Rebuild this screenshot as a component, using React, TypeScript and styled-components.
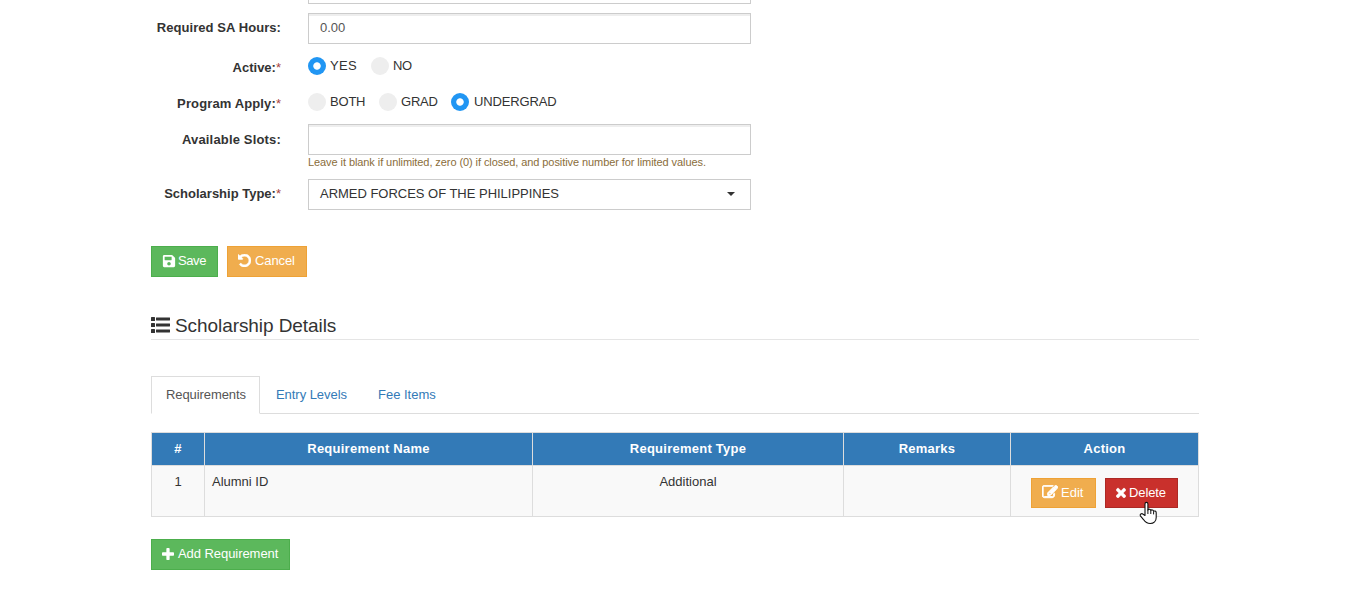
import React from 'react';
import styled, { createGlobalStyle, css } from 'styled-components';
import { FaSave } from 'react-icons/fa';

const GlobalStyle = createGlobalStyle`
  * { box-sizing: border-box; }
  body {
    margin: 0;
    background: #fff;
    color: #333;
    font: 13px/18px "Liberation Sans", Arial, sans-serif;
    overflow: hidden;
  }
`;

const Page = styled.main`
  width: 1048px;
  height: 601px;
  margin-left: 151px;
`;

const FormRow = styled.div<{ $h: number; $gap?: number }>`
  display: flex;
  height: ${(p) => p.$h}px;
  margin-bottom: ${(p) => p.$gap ?? 0}px;
`;

const Label = styled.label<{ $top: number; $ls: number }>`
  width: 130px;
  margin-right: 27px;
  padding-top: ${(p) => p.$top}px;
  text-align: right;
  font-weight: 700;
  white-space: nowrap;
  letter-spacing: ${(p) => p.$ls}px;
`;

const Required = styled.span`
  color: #a94442;
  font-weight: 400;
  letter-spacing: 0;
`;

const Field = styled.div`
  width: 443px;
`;

const control = css`
  width: 443px;
  height: 31px;
  border: 1px solid #ccc;
  background: #fff;
`;

const Input = styled.input`
  ${control}
  display: block;
  padding: 0 11px 2px;
  color: #555;
  font: inherit;
  border-radius: 0;
  outline: none;
  box-shadow: inset 0 2px 0 #eee;
`;

const ClippedInput = styled.div`
  width: 443px;
  height: 4px;
  margin: 0 0 9px 157px;
  border: solid #ccc;
  border-width: 0 1px 1px;
`;

const Help = styled.div`
  color: #8a6d3b;
  font-size: 11px;
  line-height: 15px;
  letter-spacing: -0.078px;
  white-space: nowrap;
`;

const Select = styled.div`
  ${control}
  display: flex;
  align-items: center;
  justify-content: space-between;
  padding: 0 15px 2px 11px;
`;

const SelectText = styled.span`
  letter-spacing: -0.02px;
`;

const Caret = styled.span`
  margin-top: 1px;
  border-top: 4px solid #333;
  border-left: 4px solid transparent;
  border-right: 4px solid transparent;
`;

const Radios = styled.div`
  display: flex;
  align-items: flex-start;
`;

const RadioLabel = styled.label<{ $w: number; $ls?: number; $gap?: number }>`
  display: flex;
  width: ${(p) => p.$w}px;
  gap: ${(p) => p.$gap ?? 4}px;
  line-height: 17px;
  white-space: nowrap;
  letter-spacing: ${(p) => p.$ls ?? 0}px;
`;

const Dot = styled.span<{ $on?: boolean }>`
  width: 18px;
  height: 18px;
  flex: none;
  border-radius: 50%;
  background: ${(p) => (p.$on ? 'radial-gradient(circle, #fff 3.3px, #2196f3 4.1px)' : '#eee')};
`;

const tones = {
  success: ['#5cb85c', '#4cae4c'],
  warning: ['#f0ad4e', '#eea236'],
  danger: ['#c9302c', '#ac2925'],
};

const Button = styled.button<{ $tone: keyof typeof tones; $w: number; $h?: number; $gap?: number; $ls?: number }>`
  display: flex;
  align-items: center;
  gap: ${(p) => p.$gap ?? 3}px;
  width: ${(p) => p.$w}px;
  height: ${(p) => p.$h ?? 31}px;
  padding: 0 0 1px 10px;
  color: #fff;
  font: inherit;
  letter-spacing: ${(p) => p.$ls ?? 0}px;
  white-space: nowrap;
  background: ${(p) => tones[p.$tone][0]};
  border: 1px solid ${(p) => tones[p.$tone][1]};
  cursor: pointer;
  svg { flex: none; margin-bottom: 1px; }
`;

const Actions = styled.div`
  display: flex;
  gap: 9px;
`;

const Heading = styled.h2`
  display: flex;
  align-items: center;
  gap: 5px;
  height: 29px;
  margin: 34px 0 36px;
  padding-top: 1px;
  border-bottom: 1px solid #e5e5e5;
  font-size: 19px;
  font-weight: 400;
  letter-spacing: -0.07px;
  svg { margin-bottom: 2px; }
`;

const Tabs = styled.nav`
  display: flex;
  gap: 1px;
  height: 38px;
  margin-bottom: 18px;
  border-bottom: 1px solid #ddd;
`;

const Tab = styled.a<{ $active?: boolean; $w: number; $ls?: number }>`
  width: ${(p) => p.$w}px;
  height: 38px;
  padding: 9px 0 0 14px;
  border: 1px solid transparent;
  color: #337ab7;
  white-space: nowrap;
  letter-spacing: ${(p) => p.$ls ?? 0}px;
  ${(p) => p.$active && css`
    color: #555;
    background: #fff;
    border-color: #ddd #ddd #fff;
  `}
`;

const Table = styled.table`
  width: 1048px;
  table-layout: fixed;
  border-collapse: separate;
  border-spacing: 0;
  border: solid #ddd;
  border-width: 1px 0 0 1px;
  margin-bottom: 22px;
`;

const Th = styled.th<{ $w: number }>`
  width: ${(p) => p.$w}px;
  height: 33px;
  padding: 0;
  color: #fff;
  background: #337ab7;
  border: solid #ddd;
  border-width: 0 1px 1px 0;
  letter-spacing: 0.25px;
`;

const Td = styled.td<{ $left?: boolean }>`
  height: 51px;
  padding: 7px 7px 0;
  vertical-align: top;
  text-align: ${(p) => (p.$left ? 'left' : 'center')};
  background: #f9f9f9;
  border: solid #ddd;
  border-width: 0 1px 1px 0;
`;

const RowActions = styled(Actions)`
  padding: 5px 0 0 13px;
`;

const PointerHost = styled.span`
  position: relative;
`;

const Pointer = styled.svg`
  position: absolute;
  left: 34px;
  top: 23px;
  pointer-events: none;
`;

const glyphs = {
  undo: 'M1664 896q0 156-61 298t-164 245-245 164-298 61q-172 0-327-72.5t-264-204.5q-7-10-6.5-22.5t8.5-20.5l137-138q10-9 25-9 16 2 23 12 73 95 179 147t225 52q104 0 198.5-40.5t163.5-109.5 109.5-163.5 40.5-198.5-40.5-198.5-109.5-163.5-163.5-109.5-198.5-40.5q-98 0-188 35.5t-160 101.5l137 138q31 30 14 69-17 40-59 40h-448q-26 0-45-19t-19-45v-448q0-42 40-59 39-17 69 14l130 129q107-101 244.5-156.5t284.5-55.5q156 0 298 61t245 164 164 245 61 298z',
  times: 'M1490 1322q0 40-28 68l-136 136q-28 28-68 28t-68-28l-294-294-294 294q-28 28-68 28t-68-28l-136-136q-28-28-28-68t28-68l294-294-294-294q-28-28-28-68t28-68l136-136q28-28 68-28t68 28l294 294 294-294q28-28 68-28t68 28l136 136q28 28 28 68t-28 68l-294 294 294 294q28 28 28 68z',
  plus: 'M1600 736v192q0 40-28 68t-68 28h-416v416q0 40-28 68t-68 28h-192q-40 0-68-28t-28-68v-416h-416q-40 0-68-28t-28-68v-192q0-40 28-68t68-28h416v-416q0-40 28-68t68-28h192q40 0 68 28t28 68v416h416q40 0 68 28t28 68z',
  edit: 'M888 1184l116-116-152-152-116 116v56h96v96h56zm440-720q-16-16-33 1l-350 350q-17 17-1 33t33-1l350-350q17-17 1-33zm80 594v190q0 119-84.5 203.5t-203.5 84.5h-832q-119 0-203.5-84.5t-84.5-203.5v-832q0-119 84.5-203.5t203.5-84.5h832q63 0 117 25 15 7 18 23 3 17-9 29l-49 49q-14 14-32 8-23-6-45-6h-832q-66 0-113 47t-47 113v832q0 66 47 113t113 47h832q66 0 113-47t47-113v-126q0-13 9-22l64-64q15-15 35-7t20 29zm-96-738l288 288-672 672h-288v-288zm444 132l-92 92-288-288 92-92q28-28 68-28t68 28l152 152q28 28 28 68t-28 68z',
};

const boxes = {
  undo: '128 128 1536 1536',
  times: '302 238 1188 1316',
  plus: '192 128 1408 1408',
  edit: '0 128 1792 1536',
};

function Glyph({ name, w, h, bold = 0 }: { name: keyof typeof glyphs; w: number; h: number; bold?: number }) {
  return (
    <svg width={w} height={h} viewBox={boxes[name]} fill="currentColor" stroke="currentColor" strokeWidth={bold} aria-hidden="true">
      <path d={glyphs[name]} />
    </svg>
  );
}

function ListGlyph() {
  return (
    <svg width="19" height="16" viewBox="0 0 19 16" fill="#333" aria-hidden="true">
      {[0, 6, 12].map((y) => (
        <g key={y}>
          <rect x="0" y={y} width="4" height="4" rx="0.5" />
          <rect x="5" y={y + 0.4} width="14" height="3" rx="0.3" />
        </g>
      ))}
    </svg>
  );
}

export default function App() {
  return (
    <Page>
      <GlobalStyle />
      <ClippedInput />
      <FormRow $h={31} $gap={13}>
        <Label $top={6} $ls={0.07}>Required SA Hours:</Label>
        <Field><Input defaultValue="0.00" /></Field>
      </FormRow>
      <FormRow $h={36}>
        <Label $top={2} $ls={0}>Active:<Required>*</Required></Label>
        <Radios>
          <RadioLabel $w={63} $ls={0.3}><Dot $on />YES</RadioLabel>
          <RadioLabel $w={60} $ls={-0.3}><Dot />NO</RadioLabel>
        </Radios>
      </FormRow>
      <FormRow $h={31}>
        <Label $top={2} $ls={0.13}>Program Apply:<Required>*</Required></Label>
        <Radios>
          <RadioLabel $w={71} $ls={-0.2}><Dot />BOTH</RadioLabel>
          <RadioLabel $w={72} $ls={-0.2}><Dot />GRAD</RadioLabel>
          <RadioLabel $w={110} $ls={-0.15} $gap={5}><Dot $on />UNDERGRAD</RadioLabel>
        </Radios>
      </FormRow>
      <FormRow $h={55}>
        <Label $top={7} $ls={0.17}>Available Slots:</Label>
        <Field>
          <Input />
          <Help>Leave it blank if unlimited, zero (0) if closed, and positive number for limited values.</Help>
        </Field>
      </FormRow>
      <FormRow $h={31} $gap={36}>
        <Label $top={6} $ls={0}>Scholarship Type:<Required>*</Required></Label>
        <Select><SelectText>ARMED FORCES OF THE PHILIPPINES</SelectText><Caret /></Select>
      </FormRow>
      <Actions>
        <Button $tone="success" $w={67} $gap={2} $ls={-0.4}><FaSave size={14} />Save</Button>
        <Button $tone="warning" $w={80} $gap={4} $ls={-0.1}><Glyph name="undo" w={13} h={13} bold={60} />Cancel</Button>
      </Actions>
      <Heading><ListGlyph />Scholarship Details</Heading>
      <Tabs>
        <Tab $active $w={109} $ls={-0.08}>Requirements</Tab>
        <Tab $w={101} $ls={-0.05}>Entry Levels</Tab>
        <Tab $w={90}>Fee Items</Tab>
      </Tabs>
      <Table>
        <thead>
          <tr>
            <Th $w={53}>#</Th>
            <Th $w={328}>Requirement Name</Th>
            <Th $w={311}>Requirement Type</Th>
            <Th $w={167}>Remarks</Th>
            <Th $w={188}>Action</Th>
          </tr>
        </thead>
        <tbody>
          <tr>
            <Td>1</Td>
            <Td $left>Alumni ID</Td>
            <Td>Additional</Td>
            <Td />
            <Td>
              <RowActions>
                <Button $tone="warning" $w={65} $h={30}><Glyph name="edit" w={16} h={14} bold={110} />Edit</Button>
                <PointerHost>
                  <Button $tone="danger" $w={73} $h={30} $ls={-0.1}><Glyph name="times" w={10} h={11} bold={40} />Delete</Button>
                  <Pointer width="19" height="25" viewBox="0 0 19 25">
                    <path
                      d="M6 14.5V3C6 .8 8.9 .8 8.9 3V9C9.2 7.8 11.6 7.9 11.8 9.4C12.4 8.6 14.4 8.8 14.6 10.3C15.4 9.6 17.2 10 17.2 11.8V16.5C17.2 20 14.8 22.5 11.2 22.5C7.7 22.5 6 20.8 4.7 18.8L1.4 14.8C.6 13.2 2.6 12 3.8 13Z"
                      fill="#fff" stroke="#111" strokeWidth="1.1" strokeLinejoin="round"
                    />
                    <path d="M8.9 8.5V13M11.8 9.4V13M14.6 10.3V13.4" stroke="#111" strokeWidth="1" />
                  </Pointer>
                </PointerHost>
              </RowActions>
            </Td>
          </tr>
        </tbody>
      </Table>
      <Button $tone="success" $w={139} $gap={4} $ls={-0.06}><Glyph name="plus" w={12} h={12} />Add Requirement</Button>
    </Page>
  );
}
